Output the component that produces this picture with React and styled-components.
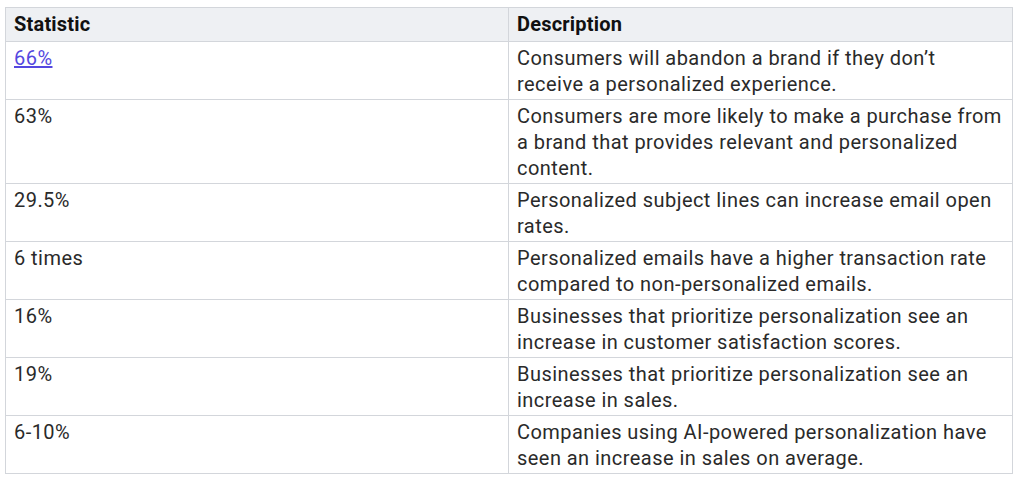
import React from "react";
import styled, { createGlobalStyle } from "styled-components";

const rows = [
    { stat: "66%", link: true, desc: "Consumers will abandon a brand if they don’t receive a personalized experience." },
    { stat: "63%", desc: "Consumers are more likely to make a purchase from a brand that provides relevant and personalized content." },
    { stat: "29.5%", desc: "Personalized subject lines can increase email open rates." },
    { stat: "6 times", desc: "Personalized emails have a higher transaction rate compared to non-personalized emails." },
    { stat: "16%", desc: "Businesses that prioritize personalization see an increase in customer satisfaction scores." },
    { stat: "19%", desc: "Businesses that prioritize personalization see an increase in sales." },
    { stat: "6-10%", desc: "Companies using AI-powered personalization have seen an increase in sales on average." },
];

function App() {
    return (
        <>
            <GlobalStyle />
            <Wrapper>
                <Table>
                    <colgroup>
                        <col style={{ width: 503 }} />
                        <col />
                    </colgroup>
                    <thead>
                        <tr>
                            <Th>Statistic</Th>
                            <Th>Description</Th>
                        </tr>
                    </thead>
                    <tbody>
                        {rows.map((r) => (
                            <tr key={r.stat}>
                                <Td>{r.link ? <A href="#">{r.stat}</A> : r.stat}</Td>
                                <Td>{r.desc}</Td>
                            </tr>
                        ))}
                    </tbody>
                </Table>
            </Wrapper>
        </>
    );
}

const GlobalStyle = createGlobalStyle`
    body {
        margin: 0;
        background: #fff;
        font-family: Roboto, "Liberation Sans", sans-serif;
        color: #2a2a2a;
    }
`;
const Wrapper = styled.div`
    padding: 7px 5px 0 5px;
`;
const Table = styled.table`
    width: 1008px;
    border-collapse: collapse;
    table-layout: fixed;
    font-size: 20px;
    line-height: 26px;
`;
const Th = styled.th`
    text-align: left;
    font-weight: 700;
    color: #111;
    letter-spacing: 0.2px;
    background: #eef0f3;
    border: 1px solid #d3d6db;
    padding: 3px 8px 4px;
    vertical-align: top;
`;
const Td = styled.td`
    border: 1px solid #d3d6db;
    padding: 3px 8px 2px;
    letter-spacing: 0.45px;
    vertical-align: top;
`;
const A = styled.a`
    color: #5548e0;
    text-decoration: underline;
`;

export default App;
